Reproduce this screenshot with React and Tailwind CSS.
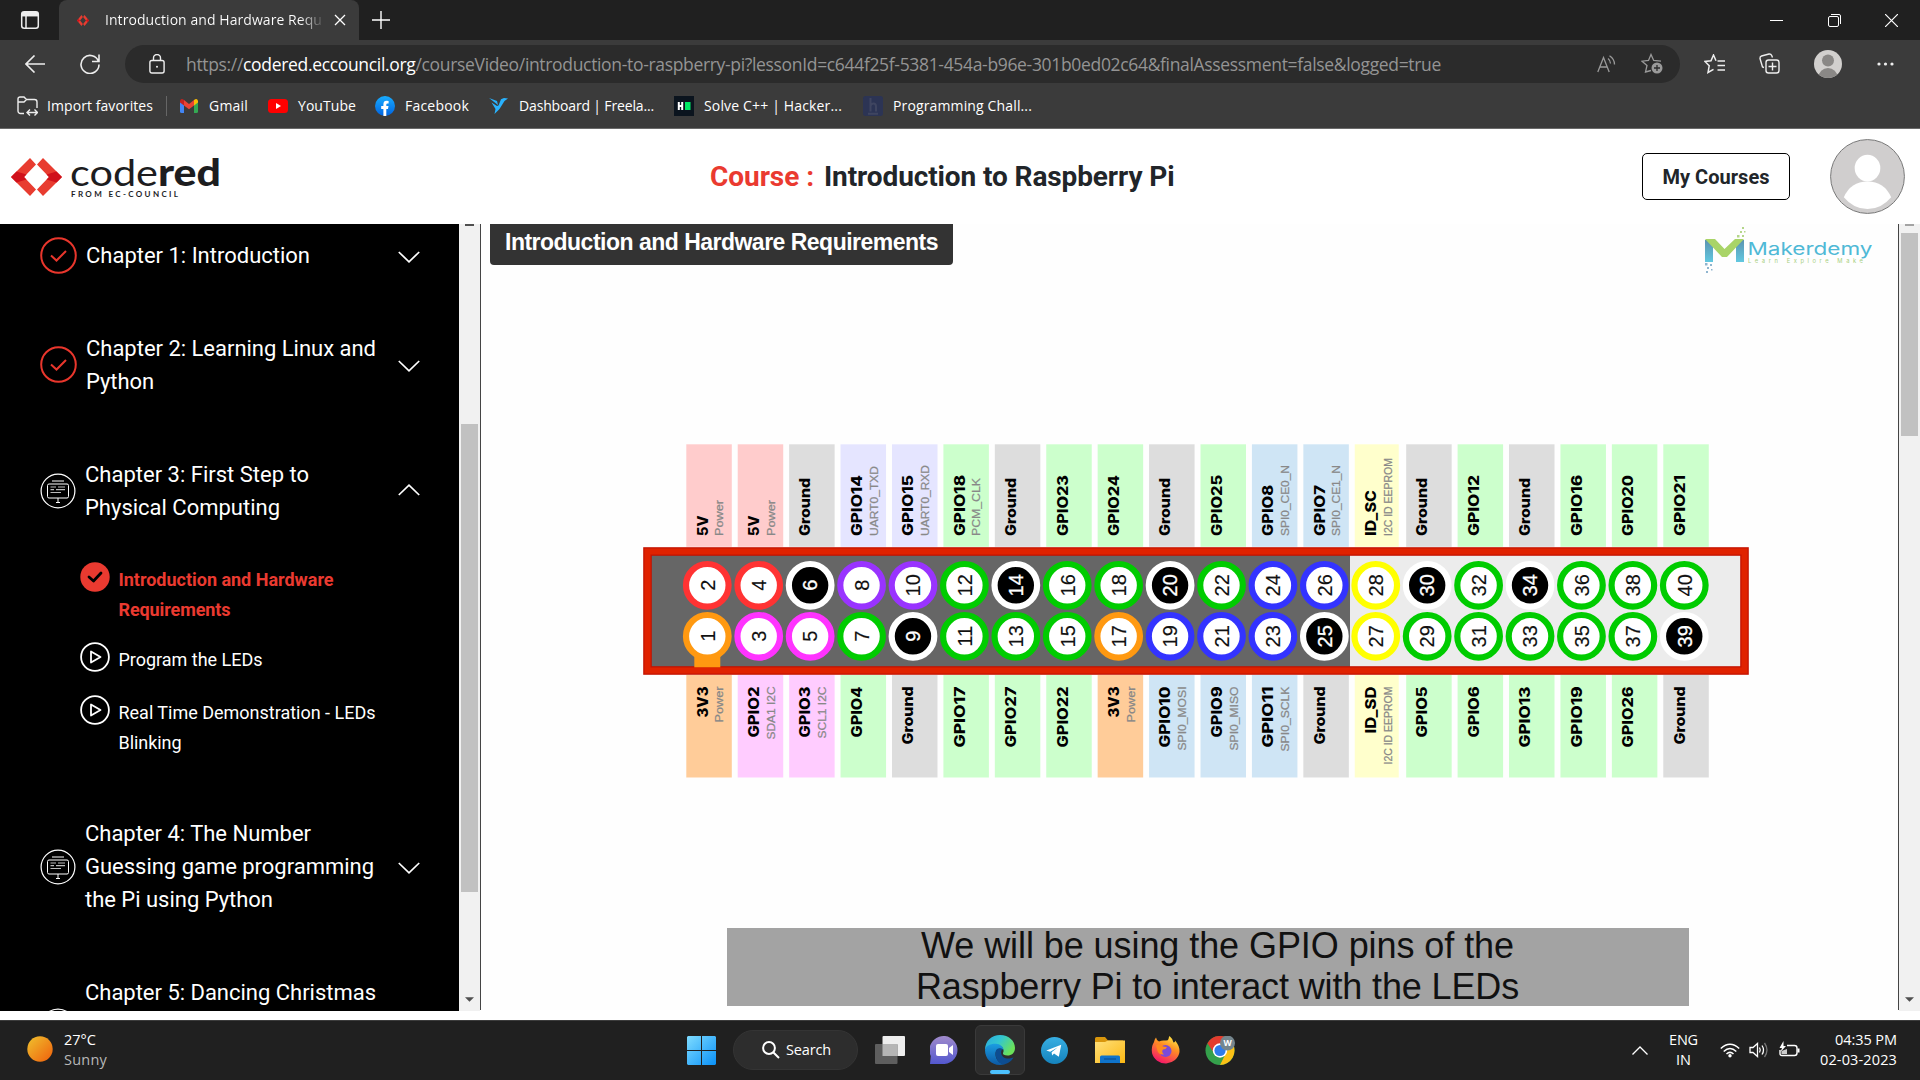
import React, { useLayoutEffect, useRef, useState } from "react";

/* Text whose tracking is adjusted so that it fills a given width. */
function Fit({ w, className = "", children }) {
  const ref = useRef(null);
  const [ls, setLs] = useState(0);
  useLayoutEffect(() => {
    const n = ref.current.textContent.length;
    setLs((w - ref.current.getBoundingClientRect().width) / n);
  }, [w]);
  return (
    <span ref={ref} style={{ letterSpacing: `${ls}px` }} className={`inline-block whitespace-pre ${className}`}>
      {children}
    </span>
  );
}

const UI = "font-['Open_Sans','Noto_Sans',sans-serif]";

function CodeMark({ className }) {
  return (
    <svg viewBox="0 0 51 38" className={className} preserveAspectRatio="none">
      <path d="M19 0 25 6.5 13 19 25 31.500 19 38 0 19Z" fill="#e83c30" />
      <path d="M32 0 26 6.500 38 19 26 31.500 32 38 51 19Z" fill="#e83c30" />
      <path d="M5.500 13.500 0 19l5.500 5.500L13 19ZM45.500 13.500 51 19l-5.500 5.500L38 19Z" fill="#d0111b" />
    </svg>
  );
}

function TitleBar() {
  return (
    <div className="flex h-10 shrink-0 bg-[#202020]">
      <div className="flex w-[59px] items-center pl-5">
        <svg viewBox="0 0 20 20" className="h-5 w-5" fill="none" stroke="#eee" strokeWidth="1.500">
          <rect x="1.700" y="1.700" width="16.600" height="16.600" rx="2.500" />
          <path d="M2 4.200H18" strokeWidth="4.500" />
          <path d="M6 6V18" />
        </svg>
      </div>
      <div className="flex w-[300px] items-center rounded-t-lg bg-[#3b3b3b] pl-[18px]">
        <CodeMark className="h-[11px] w-3" />
        <div className={`${UI} ml-[16px] w-[217px] overflow-hidden bg-gradient-to-r from-white from-90% to-[#555] bg-clip-text text-[14px] leading-5 text-transparent`}>
          <Fit w={217}>Introduction and Hardware Requ</Fit>
        </div>
        <svg viewBox="0 0 12 12" className="ml-[12px] h-3 w-3" stroke="#fff" strokeWidth="1.300">
          <path d="M1 1 11 11M11 1 1 11" />
        </svg>
      </div>
      <div className="flex flex-1 items-center pl-[13px]">
        <svg viewBox="0 0 18 18" className="mb-px h-[18px] w-[18px]" stroke="#fff" strokeWidth="1.400">
          <path d="M9 0V18M0 9H18" />
        </svg>
      </div>
      <div className="flex w-[150px] items-center justify-between pr-[22px]">
        <svg viewBox="0 0 13 13" className="h-[13px] w-[13px]" stroke="#fff"><path d="M0 6.500H13" /></svg>
        <svg viewBox="0 0 13 13" className="h-[13px] w-[13px]" stroke="#fff" fill="none">
          <rect x=".5" y="2.500" width="10" height="10" rx="1.500" />
          <path d="M3 .5H11A1.500 1.500 0 0 1 12.500 2V10" />
        </svg>
        <svg viewBox="0 0 13 13" className="h-[13px] w-[13px]" stroke="#fff" strokeWidth="1.200"><path d="M0 0 13 13M13 0 0 13" /></svg>
      </div>
    </div>
  );
}

function Toolbar() {
  return (
    <div className="flex h-12 shrink-0 items-center bg-[#3b3b3b] pb-px">
      <div className="flex w-[125px] items-center pl-[25px]">
        <svg viewBox="0 0 20 18" className="h-[18px] w-5" fill="none" stroke="#eee" strokeWidth="1.600">
          <path d="M20 9H1M9.500 .5 1 9 9.500 17.500" />
        </svg>
        <svg viewBox="0 0 20 20" className="ml-[35px] h-5 w-5" fill="none" stroke="#eee" strokeWidth="1.600">
          <path d="M18.500 7.500A9 9 0 1 0 19 10.500M19 .5V7.500H12" />
        </svg>
      </div>
      <div className="flex h-[38px] w-[1555px] items-center rounded-full bg-[#2b2b2b] pl-[24px] pr-[17px]">
        <svg viewBox="0 0 16 20" className="h-5 w-4" fill="none" stroke="#eee" strokeWidth="1.400">
          <rect x=".9" y="6.500" width="14.200" height="12.500" rx="2" />
          <path d="M4.500 6.500V4a3.500 3.500 0 0 1 7 0V6.500" />
          <circle cx="8" cy="12.700" r="1" fill="#eee" stroke="none" />
        </svg>
        <div className={`${UI} ml-[21px] flex-1 text-[17.500px] leading-6 text-[#949494]`}>
          <Fit w={1255}>
            https://<span className="text-white">codered.eccouncil.org</span>
            /courseVideo/introduction-to-raspberry-pi?lessonId=c644f25f-5381-454a-b96e-301b0ed02c64&amp;finalAssessment=false&amp;logged=true
          </Fit>
        </div>
        <svg viewBox="0 0 20 18" className="h-[18px] w-5" fill="none" stroke="#9a9a9a" strokeWidth="1.300">
          <path d="M.8 17 6.500 2.500 12.200 17M2.800 12H10.200M11 3.500Q13.500 5.500 13.500 8.500M12.500 .8Q17.500 4 17.500 9.500" />
        </svg>
        <svg viewBox="0 0 22 21" className="ml-6 h-[21px] w-[22px]" fill="none" stroke="#9a9a9a" strokeWidth="1.300">
          <path d="M10 17.500 4.500 19 6 12.500 1 8.200 7.500 7.500 10 1.500 12.700 7.500 20 8.200" />
          <circle cx="16" cy="15" r="5.500" fill="#9a9a9a" stroke="none" />
          <path d="M16 12V18M13 15H19" stroke="#2b2b2b" />
        </svg>
      </div>
      <div className="flex flex-1 items-center pl-[24px]">
        <svg viewBox="0 0 22 20" className="h-5 w-[22px]" fill="none" stroke="#eee" strokeWidth="1.500">
          <path d="M12 6.800 9.500 1 7 6.800 1 7.500 5.200 11.800 4 18.500 9.500 15.300M13.500 7H21M13.500 11.500H21M13.500 16H21" />
        </svg>
        <svg viewBox="0 0 21 21" className="ml-[33px] h-[21px] w-[21px]" fill="none" stroke="#eee" strokeWidth="1.400">
          <rect x="7" y="7" width="13" height="13" rx="2.500" />
          <path d="M13.500 9.500V17.500M9.500 13.500H17.500M5 14.500 3.500 14 1 5.500Q.8 3.500 2.500 3L10 1Q12 .8 12.700 2.500L13.500 4.500" />
        </svg>
        <svg viewBox="0 0 28 28" className="ml-[34px] h-7 w-7">
          <clipPath id="pc"><circle cx="14" cy="14" r="14" /></clipPath>
          <g clipPath="url(#pc)">
            <rect width="28" height="28" fill="#d2d0ce" />
            <circle cx="14" cy="10.500" r="6" fill="#8a8886" />
            <ellipse cx="14" cy="27" rx="9.500" ry="9" fill="#8a8886" />
          </g>
        </svg>
        <svg viewBox="0 0 17 4" className="ml-[35px] h-1 w-[17px]" fill="#eee">
          <circle cx="2" cy="2" r="1.600" /><circle cx="8.500" cy="2" r="1.600" /><circle cx="15" cy="2" r="1.600" />
        </svg>
      </div>
    </div>
  );
}

function Bookmark({ icon, w, gap, className = "", children }) {
  return (
    <div className={`flex items-center ${className}`}>
      {icon}
      <span className={`${UI} ${gap} text-[14px] leading-5 text-white`}><Fit w={w}>{children}</Fit></span>
    </div>
  );
}

function Bookmarks() {
  return (
    <div className="flex h-[41px] shrink-0 items-center border-b border-[#6a6a6a] bg-[#3b3b3b] pb-[5px] pl-[17px]">
      <Bookmark w={106} gap="ml-[9px]" icon={
        <svg viewBox="0 0 21 20" className="h-5 w-[21px]" fill="none" stroke="#eee" strokeWidth="1.400">
          <path d="M7 17.500H3.500A2.500 2.500 0 0 1 1 15V3A2 2 0 0 1 3 1H7L9.500 3.500H17.500A2.500 2.500 0 0 1 20 6V12M1 6H7L9.500 3.500M10.500 16.500H20M13 13.500 10 16.500 13 19.500M17.500 13.500 20.500 16.500 17.500 19.500" />
        </svg>
      }>Import favorites</Bookmark>
      <div className="ml-[13px] h-5 w-px bg-[#666]" />
      <Bookmark className="ml-[13px]" w={39} gap="ml-[11px]" icon={
        <svg viewBox="0 0 18 14" className="h-[14px] w-[18px]">
          <path d="M0 2V12.500Q0 14 1.500 14H4V6Z" fill="#4285f4" />
          <path d="M18 2V12.500Q18 14 16.500 14H14V6Z" fill="#34a853" />
          <path d="M4 1 9 5 14 1V6.500L9 10.300 4 6.500Z" fill="#ea4335" />
          <path d="M0 2.500V2Q.8-1.200 4 1V6.500L0 3.500Z" fill="#c5221f" />
          <path d="M18 2.500V2Q17.200-1.200 14 1V6.500L18 3.500Z" fill="#fbbc04" />
        </svg>
      }>Gmail</Bookmark>
      <Bookmark className="ml-5" w={58} gap="ml-[10px]" icon={
        <svg viewBox="0 0 20 14" className="h-[14px] w-5"><rect width="20" height="14" rx="3.500" fill="#f00" /><path d="M8 4 13 7 8 10Z" fill="#fff" /></svg>
      }>YouTube</Bookmark>
      <Bookmark className="ml-[19px]" w={64} gap="ml-[10px]" icon={
        <svg viewBox="0 0 20 20" className="h-5 w-5">
          <linearGradient id="fb" x2="0" y2="1"><stop stopColor="#18acfe" /><stop offset="1" stopColor="#0163e0" /></linearGradient>
          <circle cx="10" cy="10" r="10" fill="url(#fb)" />
          <path d="M8.400 20V13H6.200V10H8.400V8.200Q8.400 4.800 11.600 4.800L13.600 5V7.400H12.400Q11.300 7.400 11.300 8.600V10H13.500L13 13H11.300V20Z" fill="#fff" />
        </svg>
      }>Facebook</Bookmark>
      <Bookmark className="ml-5" w={135} gap="ml-[11px]" icon={
        <svg viewBox="0 0 19 16" className="h-4 w-[19px]" fill="#29b2fe">
          <path d="M0 0 8 3 9 7ZM2.500 4.500 8 8 9.500 7.500 12 1.200 15 0 19 .5 15.500 3 10.500 11 5.500 16 6.500 11Z" />
        </svg>
      }>Dashboard | Freela...</Bookmark>
      <Bookmark className="ml-5" w={138} gap="ml-[10px]" icon={
        <svg viewBox="0 0 20 20" className="h-5 w-5"><rect width="20" height="20" fill="#0b141e" /><path d="M4.800 6V14M8.200 6V14M4 10H9" stroke="#fff" strokeWidth="2" /><rect x="11" y="6" width="5.500" height="8" fill="#00ea64" /></svg>
      }>Solve C++ | Hacker...</Bookmark>
      <Bookmark className="ml-[21px]" w={139} gap="ml-[10px]" icon={
        <svg viewBox="0 0 20 20" className="h-5 w-5"><rect width="20" height="20" rx="2.500" fill="#2c3454" /><path d="M7.500 2V15.500M7.500 10Q8 7.500 10.500 7.500T13 10.500V15.500M5 17.700H15" fill="none" stroke="#3f4560" strokeWidth="2" /></svg>
      }>Programming Chall...</Bookmark>
    </div>
  );
}

function Header() {
  return (
    <header className="flex h-[95px] shrink-0 items-center bg-white font-['Roboto',sans-serif]">
      <div className="flex w-[699px] items-center pl-[11px]">
        <svg viewBox="0 0 210 44" className="h-[44px] w-[210px] font-['Lato',sans-serif]" fill="#1d1d1f">
          <path d="M19 3 25 9.500 13 22 25 34.500 19 41 0 22ZM32 3 26 9.500 38 22 26 34.500 32 41 51 22Z" fill="#e83c30" />
          <path d="M5.500 16.500 0 22l5.500 5.500L15.500 24.500 13 22 15.500 19.500ZM45.500 16.500 51 22l-5.500 5.500L35.500 24.500 38 22 35.500 19.500Z" fill="#d0111b" />
          <text x="59" y="31" fontSize="37.500" textLength="88" lengthAdjust="spacingAndGlyphs">code</text>
          <text x="147" y="31" fontSize="37.500" fontWeight="900" textLength="63" lengthAdjust="spacingAndGlyphs">red</text>
          <text x="60" y="41.500" fontSize="8" fontWeight="bold" textLength="107">FROM EC-COUNCIL</text>
        </svg>
      </div>
      <h1 className="ml-[11px] flex text-[28px] font-bold leading-9 text-[#212529]">
        <span className="mr-[10px] text-[#ea3a30]"><Fit w={104}>Course :</Fit></span>
        <Fit w={350.500}>Introduction to Raspberry Pi</Fit>
      </h1>
      <button className="ml-auto flex h-[47px] w-[148px] items-center justify-center rounded-[5px] border border-black text-[20px] font-bold text-[#212529]">
        <Fit w={107}>My Courses</Fit>
      </button>
      <svg viewBox="0 0 76 76" className="mb-px ml-10 mr-[15px] h-[75px] w-[75px]">
        <circle cx="38" cy="38" r="37.400" fill="#d0cece" stroke="#777" />
        <ellipse cx="38" cy="29.500" rx="13" ry="13.500" fill="#fff" />
        <path d="M14 59Q21 43 38 43T62 59Q52 71 38 71T14 59Z" fill="#fff" />
      </svg>
    </header>
  );
}

function DoneRing() {
  return (
    <svg viewBox="0 0 37 37" className="h-[37px] w-[37px] shrink-0" fill="none" stroke="#e9362c" strokeWidth="2">
      <circle cx="18.500" cy="18.500" r="17.300" /><path d="M11 18.500 16.500 23.500 26 14" />
    </svg>
  );
}

function BoardRing() {
  return (
    <svg viewBox="0 0 36 36" className="h-[36px] w-[36px] shrink-0" fill="none" stroke="#fff" strokeWidth="1">
      <circle cx="18" cy="18" r="16.900" strokeWidth="1.200" />
      <path d="M12 8H24M9 11H27Q28.500 11 28.500 12.500V23.500Q28.500 25 27 25H9Q7.500 25 7.500 23.500V12.500Q7.500 11 9 11ZM18 25V29.500M16 29.500H20" />
      <path d="M10.500 14H16M18 14H25M10.500 16.700H14M16 16.700H25M10.500 19.500H21" strokeWidth="1.200" stroke="#bbb" />
    </svg>
  );
}

function Chevron({ up }) {
  return (
    <svg viewBox="0 0 22 12" className="h-3 w-[22px] shrink-0" fill="none" stroke="#fff" strokeWidth="1.700">
      <path d={up ? "M.8 11 11 1.200 21.200 11" : "M.8 1 11 10.800 21.200 1"} />
    </svg>
  );
}

function Chapter({ icon, lines, up, chevron = true, className = "", textClass, chevClass = "" }) {
  return (
    <div className={`flex items-center ${className}`}>
      {icon}
      <div className={`flex flex-col items-start text-[22px] leading-[33px] text-white ${textClass}`}>
        {lines.map(([t, w]) => <Fit key={t} w={w}>{t}</Fit>)}
      </div>
      {chevron && <div className={`ml-auto mr-[39px] ${chevClass}`}><Chevron up={up} /></div>}
    </div>
  );
}

function PlayRing() {
  return (
    <svg viewBox="0 0 30 30" className="h-[30px] w-[30px] shrink-0" fill="none" stroke="#fff" strokeWidth="1.800">
      <circle cx="15" cy="15" r="13.900" /><path d="M11 9.500V20.500L20.500 15Z" strokeLinejoin="round" />
    </svg>
  );
}

function Lesson({ icon, lines, className = "" }) {
  return (
    <div className={`flex items-start pl-[79.500px] text-[18px] leading-[30px] ${className}`}>
      {icon}
      <div className="ml-[9px] mt-[3px] flex flex-col items-start">
        {lines.map(([t, w]) => <Fit key={t} w={w}>{t}</Fit>)}
      </div>
    </div>
  );
}

function Arrow({ className = "" }) {
  return <svg viewBox="0 0 10 5" className={`h-[5px] w-[9px] ${className}`} fill="#505050"><path d="M0 0H10L5 5Z" /></svg>;
}

function Sidebar() {
  return (
    <aside className="flex h-[787px] shrink-0">
      <div className="h-full w-[459px] overflow-hidden bg-black font-['Roboto',sans-serif]">
        <Chapter className="mt-[13px] h-[37px] pl-[40px]" icon={<DoneRing />} textClass="ml-[9px]" chevClass="mt-[3px]" lines={[["Chapter 1: Introduction", 224]]} />
        <Chapter className="mt-[56px] h-[69px] pl-[40px]" icon={<DoneRing />} textClass="ml-[9px]" chevClass="mt-[3px]" lines={[["Chapter 2: Learning Linux and", 290], ["Python", 68]]} />
        <Chapter className="mt-[59px] h-[66px] pl-[39.500px]" up icon={<BoardRing />} textClass="ml-[9.500px]" chevClass="mb-[3px]" lines={[["Chapter 3: First Step to", 224], ["Physical Computing", 195]]} />
        <Lesson className="mt-[38px] font-bold text-[#ea3a30]" lines={[["Introduction and Hardware", 215], ["Requirements", 112]]} icon={
          <svg viewBox="0 0 30 30" className="h-[30px] w-[30px] shrink-0"><circle cx="15" cy="15" r="14.700" fill="#ea3a30" /><path d="M9 15 13.500 19 21 11" fill="none" stroke="#000" strokeWidth="2.800" strokeLinecap="round" strokeLinejoin="round" /></svg>
        } />
        <Lesson className="mt-[17px] text-white" icon={<PlayRing />} lines={[["Program the LEDs", 144]]} />
        <Lesson className="mt-[20px] text-white" icon={<PlayRing />} lines={[["Real Time Demonstration - LEDs", 257], ["Blinking", 63]]} />
        <Chapter className="mt-[59px] h-[99px] pl-[39.500px]" icon={<BoardRing />} textClass="ml-[9.500px]" chevClass="mt-[3px]" lines={[["Chapter 4: The Number", 226], ["Guessing game programming", 289], ["the Pi using Python", 188]]} />
        <Chapter className="mt-[60px] h-[99px] pl-[39.500px]" chevron={false} icon={<BoardRing />} textClass="ml-[9.500px] h-[99px]" lines={[["Chapter 5: Dancing Christmas", 291]]} />
      </div>
      <div className="flex w-[21px] flex-col items-center bg-[#f1f1f1]">
        <div className="h-[2px] w-[9px] bg-[#505050]" />
        <div className="mt-[198px] h-[468px] w-[17px] bg-[#c1c1c1]" />
        <Arrow className="mt-[105px]" />
      </div>
      <div className="h-[786px] w-px bg-[#444]" />
    </aside>
  );
}

const BAR = { r: "#ffcccc", k: "#dddddd", v: "#e5e5ff", g: "#ccffcc", o: "#ffcc99", m: "#ffccff", b: "#cfe5f5", y: "#ffffcc" };
const RING = { r: "#ff3333", k: "#ffffff", v: "#9933ff", g: "#00cc00", o: "#ff9911", m: "#ff33ff", b: "#3333ff", y: "#ffff00" };

const TOP = [
  ["r", "5V", 20.5, "Power", 36], ["r", "5V", 20.5, "Power", 36], ["k", "Ground", 58],
  ["v", "GPIO14", 61, "UART0_TXD", 70], ["v", "GPIO15", 61, "UART0_RXD", 71], ["g", "GPIO18", 61, "PCM_CLK", 58],
  ["k", "Ground", 58], ["g", "GPIO23", 61], ["g", "GPIO24", 61], ["k", "Ground", 58], ["g", "GPIO25", 61],
  ["b", "GPIO8", 51, "SPI0_CE0_N", 71], ["b", "GPIO7", 51, "SPI0_CE1_N", 71], ["y", "ID_SC", 46, "I2C ID EEPROM", 78],
  ["k", "Ground", 58], ["g", "GPIO12", 61], ["k", "Ground", 58], ["g", "GPIO16", 61], ["g", "GPIO20", 61], ["g", "GPIO21", 61],
];
const BOTTOM = [
  ["o", "3V3", 31, "Power", 36], ["m", "GPIO2", 51, "SDA1 I2C", 53], ["m", "GPIO3", 51, "SCL1 I2C", 52], ["g", "GPIO4", 51],
  ["k", "Ground", 58], ["g", "GPIO17", 61], ["g", "GPIO27", 61], ["g", "GPIO22", 61], ["o", "3V3", 31, "Power", 36],
  ["b", "GPIO10", 61, "SPI0_MOSI", 64], ["b", "GPIO9", 51, "SPI0_MISO", 64], ["b", "GPIO11", 61, "SPI0_SCLK", 65], ["k", "Ground", 58],
  ["y", "ID_SD", 47, "I2C ID EEPROM", 78], ["g", "GPIO5", 51], ["g", "GPIO6", 51], ["g", "GPIO13", 61], ["g", "GPIO19", 61],
  ["g", "GPIO26", 61], ["k", "Ground", 58],
];

/* One header pin: its label strip and its numbered ring. */
function Pin({ data, i, low }) {
  const [c, name, nw, sub, sw] = data;
  const x = 43.3 + i * 51.42;
  const n = i * 2 + (low ? 1 : 2);
  const cx = x + 21;
  const cy = low ? 192.3 : 141.3;
  const black = c === "k";
  const start = (len) => (low ? 242.5 + len : 92);
  return (
    <g>
      <rect x={x} y={low ? 231 : 0.3} width={c === "y" ? 44 : 45.500} height={102.500} fill={BAR[c]} />
      <text transform={`translate(${x + 21.3} ${start(nw)}) rotate(-90)`} textLength={nw} lengthAdjust="spacingAndGlyphs" fontSize="14.200" className="font-['Inter',sans-serif] font-extrabold" fill="#000">{name}</text>
      {sub && <text transform={`translate(${x + 37} ${start(sw)}) rotate(-90)`} textLength={sw} lengthAdjust="spacingAndGlyphs" fontSize="11.600" fill="#888" stroke="#888" strokeWidth=".25">{sub}</text>}
      {low && i === 0 && <rect x={cx - 13} y={cy + 18} width="26" height="13" fill="#ff9911" />}
      <circle cx={cx} cy={cy} r="21.300" fill={black ? "#000" : "#fff"} stroke={RING[c]} strokeWidth="6.200" />
      <text transform={`translate(${cx + 7.300} ${cy}) rotate(-90)`} textAnchor="middle" fontSize="20" fill={black ? "#fff" : "#111"} stroke={black ? "#fff" : "#111"} strokeWidth={black ? 0.3 : 0.15}>{n}</text>
    </g>
  );
}

function PinDiagram() {
  return (
    <svg viewBox="0 0 1106 334" className="ml-[162px] mt-[179px] h-[334px] w-[1106px] shrink-0 font-['Liberation_Sans',Arial,sans-serif]">
      <rect x="4.500" y="107" width="1097" height="120" fill="#666" />
      <rect x="707" y="107" width="394" height="120" fill="#ececec" />
      <rect x="4.500" y="107.500" width="1097" height="119" fill="none" stroke="#c41200" strokeWidth="8.600" />
      <rect x="4.500" y="107.500" width="1097" height="119" fill="none" stroke="#e02200" strokeWidth="6" />
      {TOP.map((d, i) => <Pin key={i} data={d} i={i} />)}
      {BOTTOM.map((d, i) => <Pin key={i} data={d} i={i} low />)}
    </svg>
  );
}

function MakerLogo() {
  return (
    <svg viewBox="0 0 170 48" className="mt-[3px] h-12 w-[170px] shrink-0 font-['Inter',sans-serif]">
      <linearGradient id="mk" x2="0" y2="1"><stop stopColor="#5b93b0" /><stop offset="1" stopColor="#62c8e0" /></linearGradient>
      <path d="M1 13H9V35H1ZM32 13H40V35H32Z" fill="url(#mk)" />
      <path d="M1 12H11L20.500 22 31 12H40L23 30H18Z" fill="#a9d468" />
      <g fill="#b4d68a"><rect x="33" y="8" width="2.500" height="2.500" /><rect x="38" y="8" width="2" height="2" /><rect x="36" y="4" width="2" height="2" /><rect x="40" y="4" width="1.500" height="1.500" /><rect x="38" y="0" width="2" height="2" /></g>
      <g fill="#8fb5cf"><rect x="1" y="36" width="2.500" height="2.500" /><rect x="6" y="37" width="2" height="2" /><rect x="3" y="40" width="2" height="2" /><rect x="7" y="42" width="1.500" height="1.500" /><rect x="2" y="44" width="2" height="2" /></g>
      <text x="43.500" y="28" fontSize="17.500" fill="#4fb9d6" textLength="125" lengthAdjust="spacingAndGlyphs">Makerdemy</text>
      <text x="44" y="36" fontSize="5.800" fill="#a8cf80" textLength="115">Learn Explore Make</text>
    </svg>
  );
}

function Video() {
  return (
    <main className="flex h-[786px] flex-1 flex-col overflow-hidden bg-[#fefefe] font-['Liberation_Sans',Arial,sans-serif]">
      <div className="flex h-[41px] shrink-0 items-start justify-between pl-[9px] pr-[24px]">
        <div className="flex h-[41px] w-[463px] rounded-b-[4px] bg-[#333] pl-[15px] pt-[4px] text-[23px] font-bold leading-[28px] text-white">
          <Fit w={433}>Introduction and Hardware Requirements</Fit>
        </div>
        <MakerLogo />
      </div>
      <PinDiagram />
      <div className="ml-[246px] mt-[150px] flex h-[78px] w-[962px] shrink-0 flex-col items-center bg-[#a3a3a3] pl-[19px] text-[36px] leading-[41px] text-[#111]">
        <Fit w={593} className="-mt-[3px]">We will be using the GPIO pins of the</Fit>
        <Fit w={603}>Raspberry Pi to interact with the LEDs</Fit>
      </div>
    </main>
  );
}

function Taskbar() {
  return (
    <footer className={`${UI} flex h-[60px] shrink-0 border-t border-[#3c3c3c] bg-[#202020] text-[14.500px] leading-5 text-white`}>
      <div className="flex w-[687px] items-center pl-[27px]">
        <svg viewBox="0 0 26 26" className="mb-[3px] h-[26px] w-[26px]">
          <linearGradient id="sun" x2="1" y2="1"><stop stopColor="#efc22e" /><stop offset="1" stopColor="#ef5f0c" /></linearGradient>
          <circle cx="13" cy="13" r="12.700" fill="url(#sun)" />
        </svg>
        <div className="mb-[2px] ml-[11px] flex flex-col items-start">
          <Fit w={32}>27°C</Fit>
          <span className="text-[#b8b8b8]"><Fit w={43}>Sunny</Fit></span>
        </div>
      </div>
      <div className="flex items-center pb-px">
        <svg viewBox="0 0 29 29" className="h-[29px] w-[29px]">
          <linearGradient id="win" x2="1" y2="1"><stop stopColor="#7fdcff" /><stop offset="1" stopColor="#0a91f8" /></linearGradient>
          <path d="M1 0H14V14H0V1ZM15 0H28L29 1V14H15ZM0 15H14V29H1L0 28ZM15 15H29V28L28 29H15Z" fill="url(#win)" />
        </svg>
        <div className="ml-[17px] flex h-10 w-[125px] items-center rounded-full border border-[#343434] bg-[#2d2d2d] pl-[28px]">
          <svg viewBox="0 0 18 18" className="h-[18px] w-[18px]" fill="none" stroke="#fff" strokeWidth="2"><circle cx="7" cy="7" r="5.900" /><path d="M11.200 11.200 17 17" /></svg>
          <span className="ml-[6px]"><Fit w={45}>Search</Fit></span>
        </div>
        <svg viewBox="0 0 30 28" className="ml-[17px] h-7 w-[30px]">
          <rect x="7.500" y="0" width="22.500" height="20" rx="1" fill="#eee" /><rect x="0" y="8" width="22.500" height="20" rx="1" fill="#5e5e5e" /><rect x="7.500" y="8" width="15" height="12" fill="#b5b5b5" />
        </svg>
        <svg viewBox="0 0 29 28" className="ml-[25px] h-7 w-[29px]">
          <linearGradient id="mt" x2="0" y2="1"><stop stopColor="#a08acb" /><stop offset="1" stopColor="#5358cf" /></linearGradient>
          <path d="M0 28 .8 20A14 14 0 1 1 14.500 28Z" fill="url(#mt)" />
          <rect x="6" y="8" width="12" height="12" rx="2" fill="#fff" /><path d="M19 12 23 9V19L19 16Z" fill="#fff" />
        </svg>
        <div className="ml-4 flex h-[50px] w-[50px] flex-col items-center rounded-md border border-[#3a3a3a] bg-[#2d2d2d] pt-[9px]">
          <svg viewBox="0 0 30 30" className="h-[30px] w-[30px] shrink-0">
            <linearGradient id="e1" x2="1" y2=".5"><stop stopColor="#2aa8e0" /><stop offset=".5" stopColor="#33c6d0" /><stop offset="1" stopColor="#6be25a" /></linearGradient>
            <linearGradient id="e2" x2="0" y2="1"><stop stopColor="#1b9de2" /><stop offset="1" stopColor="#0c59a4" /></linearGradient>
            <path d="M0 15C0 5.500 7 0 15 0 24 0 30 6 30 13 30 18 26.500 20.500 22.500 20.500 19.500 20.500 17.500 19.500 18 18 19.500 16 18.500 10.500 12 10.500 5 10.500 0 13.500 0 15Z" fill="url(#e1)" />
            <path d="M0 15C.5 11 5 8.500 11 8.700 15 9 18.500 11.500 18.500 15 16 12.500 10.500 13.500 10.500 19 10.500 25 15 29 20 29 10 32.500 0 26 0 15Z" fill="url(#e2)" />
            <path d="M10.500 18C10.500 13.500 14.500 12.500 17.500 14 15 16 15.500 22.500 22 23.500 25 23.800 27.500 22.500 28.500 22.500 26 27 21.500 29.500 18 29.300 13 28 10.500 23 10.500 18Z" fill="#0d4d91" />
          </svg>
          <div className="mt-[5px] h-1 w-5 shrink-0 rounded-full bg-[#4cc2ff]" />
        </div>
        <svg viewBox="0 0 28 28" className="ml-4 h-[27px] w-[27px]">
          <linearGradient id="tg" x2="0" y2="1"><stop stopColor="#37aee2" /><stop offset="1" stopColor="#1583bd" /></linearGradient>
          <circle cx="14" cy="14" r="14" fill="url(#tg)" /><path d="M5.500 14 21 8 18.500 20.500 13.500 17 11.500 19.300 11 15.800 17.500 10.500 9.500 15.300Z" fill="#fff" />
        </svg>
        <svg viewBox="0 0 30 26" className="ml-[27px] h-[26px] w-[30px]">
          <linearGradient id="fd" x2="1" y2="1"><stop stopColor="#ffe07a" /><stop offset="1" stopColor="#fcb813" /></linearGradient>
          <path d="M0 1.500Q0 0 1.500 0H10L13 3.500H28V12H0Z" fill="#d9960c" /><path d="M0 5H10L13 3.500H30V26H0Z" fill="url(#fd)" />
          <path d="M5 26V20Q5 18.500 6.500 18.500H23.500Q25 18.500 25 20V26Z" fill="#0f74cc" /><path d="M9 22H21" stroke="#0a4f96" strokeWidth="1.200" />
        </svg>
        <svg viewBox="0 0 29 29" className="ml-[26px] h-[29px] w-[29px]">
          <linearGradient id="ff" x1=".8" y1="0" x2=".3" y2="1"><stop stopColor="#fff04a" /><stop offset=".4" stopColor="#ff8f23" /><stop offset="1" stopColor="#f4126c" /></linearGradient>
          <path d="M3 6Q3.500 3 5 1.500 5.500 4.500 8 5.500 11 4 14 4.500 17 5 17.500 3 17.800 1 18.500 0 22 3 22.500 6.500 24.500 6.500 24 4.500 29 10 28.500 16A14 13.500 0 0 1 1 17Q0 11 3 6Z" fill="url(#ff)" />
          <circle cx="14.500" cy="15" r="6" fill="#7a4bd8" /><path d="M5 9Q9 7.500 12 10.500L16 11Q15 13.500 12 13.500 10 16 13 18.500 8 19 6.500 15Z" fill="#ff8a1f" />
        </svg>
        <svg viewBox="0 0 30 29" className="ml-[25px] h-[29px] w-[30px]">
          <circle cx="15" cy="14.500" r="14.500" fill="#34a04b" />
          <path d="M2.400 7.300A14.500 14.500 0 0 1 27.600 7.300L15 8.500 9 17Z" fill="#e33b2e" />
          <path d="M27.600 7.300A14.500 14.500 0 0 1 15 29L21 17 20 8Z" fill="#fbc116" />
          <circle cx="15" cy="14.500" r="7.200" fill="#fff" /><circle cx="15" cy="14.500" r="5.600" fill="#2f7bea" />
          <circle cx="22.500" cy="7" r="7.500" fill="#75868e" />
          <text x="22.500" y="9.800" fontSize="8.500" fill="#fff" textAnchor="middle" fontWeight="bold">W</text>
        </svg>
      </div>
      <div className="ml-auto flex items-center pb-px">
        <svg viewBox="0 0 16 9" className="h-[9px] w-4" fill="none" stroke="#fff" strokeWidth="1.300"><path d="M.5 8.500 8 1 15.500 8.500" /></svg>
        <div className="ml-[21px] flex w-[29px] flex-col items-center"><Fit w={29}>ENG</Fit><Fit w={15}>IN</Fit></div>
        <svg viewBox="0 0 20 15" className="ml-[22px] h-[15px] w-5" fill="none" stroke="#fff" strokeWidth="1.500">
          <path d="M.8 5.500Q10-3 19.200 5.500M3.700 8.500Q10 2.500 16.300 8.500M6.500 11Q10 7.800 13.500 11" /><circle cx="10" cy="12.800" r="1.700" fill="#fff" stroke="none" />
        </svg>
        <svg viewBox="0 0 21 18" className="ml-[9px] h-[18px] w-[21px]" fill="none" stroke="#fff" strokeWidth="1.300">
          <path d="M1 6.500H4L8.500 2.500V15.500L4 11.500H1ZM10.500 6.500Q12 9 10.500 11.500M13 4.500Q16 9 13 13.500" /><path d="M15.500 2Q20.500 9 15.500 16" stroke="#777" />
        </svg>
        <svg viewBox="0 0 21 18" className="ml-[9px] h-[18px] w-[21px]" fill="none" stroke="#fff" strokeWidth="1.400">
          <path d="M8 4.500H15.500Q18 4.500 18 7V12Q18 14.500 15.500 14.500H3Q1 14.500 1 12.500V9" /><path d="M18.500 7.500H20.500V11.500H18.500ZM4.500 0 .5 7H3L1.500 11 7 5H4.500Z" fill="#fff" stroke="none" /><path d="M2.500 13V10L8 8V13Z" fill="#ccc" stroke="none" />
        </svg>
        <div className="mb-px ml-[20px] mr-[23px] flex w-[77px] flex-col items-end"><Fit w={62}>04:35 PM</Fit><Fit w={77}>02-03-2023</Fit></div>
      </div>
    </footer>
  );
}

export default function App() {
  return (
    <div className="flex h-[1080px] w-[1920px] flex-col overflow-hidden bg-white">
      <TitleBar />
      <Toolbar />
      <Bookmarks />
      <Header />
      <div className="flex h-[796px] shrink-0 items-start bg-white">
        <Sidebar />
        <Video />
        <div className="h-[786px] w-px bg-[#444]" />
        <div className="flex h-[787px] w-[21px] flex-col items-center bg-[#f1f1f1]">
          <div className="h-[2px] w-[9px] bg-[#a3a3a3]" />
          <div className="mt-[7px] h-[203px] w-[17px] bg-[#c1c1c1]" />
          <Arrow className="mt-[561px]" />
        </div>
      </div>
      <Taskbar />
    </div>
  );
}
